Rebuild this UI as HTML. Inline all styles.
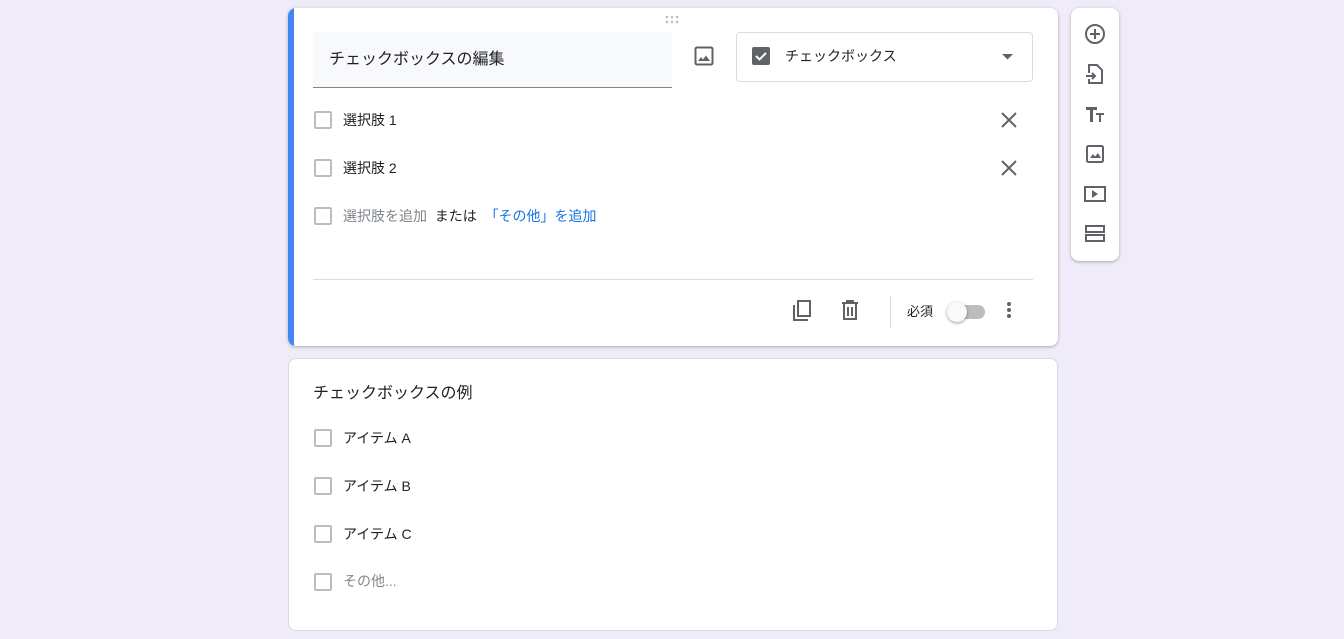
<!DOCTYPE html>
<html><head><meta charset="utf-8"><style>
body{margin:0;width:1344px;height:639px;background:#f0ebf8;font-family:"Liberation Sans","Noto Sans CJK JP",sans-serif;color:#202124;position:relative;overflow:hidden}
.a{position:absolute}
.card{position:absolute;background:#fff;border-radius:8px;border:1px solid #dadce0;box-sizing:border-box}
.cb{position:absolute;width:18px;height:18px;border:2px solid #bdbdbd;border-radius:2px;box-sizing:border-box}
.t{position:absolute;font-size:14px;white-space:nowrap;line-height:20px}
svg{position:absolute}
</style></head><body>
<div class="card" style="left:288px;top:8px;width:770px;height:338px;border:none;box-shadow:0 1px 3px rgba(0,0,0,.3);overflow:hidden">
<div class="a" style="left:0;top:0;width:6px;height:338px;background:#4285f4"></div>
</div>
<svg style="left:665px;top:15px" width="16" height="10"><g fill="#bdbdbd"><circle cx="2" cy="2" r="1.3"/><circle cx="7" cy="2" r="1.3"/><circle cx="12" cy="2" r="1.3"/><circle cx="2" cy="7" r="1.3"/><circle cx="7" cy="7" r="1.3"/><circle cx="12" cy="7" r="1.3"/></g></svg>
<div class="a" style="left:313px;top:32px;width:359px;height:55px;background:#f8f9fa;border-bottom:1px solid #80868b"></div>
<div class="t" style="left:329px;top:50px;font-size:16px">チェックボックスの編集</div>
<svg style="left:694px;top:46px" width="20" height="20" viewBox="0 0 20 20"><rect x="1.5" y="1.5" width="17" height="17" rx="1.5" fill="none" stroke="#5f6368" stroke-width="2"/><path d="M4 15l3-4 2 2.5 3-4 4 5.5z" fill="#5f6368"/></svg>
<div class="a" style="left:736px;top:32px;width:297px;height:50px;border:1px solid #dadce0;border-radius:4px;box-sizing:border-box"></div>
<svg style="left:752px;top:47px" width="18" height="18"><rect width="18" height="18" rx="2" fill="#5f6368"/><path d="M4 9l3.5 3.5L14 6" stroke="#fff" stroke-width="2" fill="none"/></svg>
<div class="t" style="left:785px;top:46px">チェックボックス</div>
<svg style="left:1002px;top:54px" width="12" height="6"><path d="M0 0h11L5.5 5.5z" fill="#5f6368"/></svg>
<div class="cb" style="left:314px;top:111px"></div><div class="t" style="left:343px;top:110px">選択肢 1</div>
<div class="cb" style="left:314px;top:159px"></div><div class="t" style="left:343px;top:158px">選択肢 2</div>
<div class="cb" style="left:314px;top:207px"></div><div class="t" style="left:343px;top:206px"><span style="color:#80868b">選択肢を追加</span>&nbsp; または &nbsp;<span style="color:#1a73e8">「その他」を追加</span></div>
<svg style="left:1001px;top:112px" width="16" height="16"><path d="M1 1l14 14M15 1L1 15" stroke="#5f6368" stroke-width="2"/></svg>
<svg style="left:1001px;top:160px" width="16" height="16"><path d="M1 1l14 14M15 1L1 15" stroke="#5f6368" stroke-width="2"/></svg>
<div class="a" style="left:313px;top:279px;width:720px;height:1px;background:#dadce0"></div>
<svg style="left:791px;top:299px" width="22" height="22"><path d="M3 6v15h14" fill="none" stroke="#5f6368" stroke-width="2"/><rect x="7" y="2" width="12" height="15" fill="none" stroke="#5f6368" stroke-width="2"/></svg>
<svg style="left:840px;top:300px" width="20" height="20"><path d="M2 3h16M7 3V1h6v2M4 4v15h12V4M8 7v9M12 7v9" fill="none" stroke="#5f6368" stroke-width="2"/></svg>
<div class="a" style="left:890px;top:296px;width:1px;height:32px;background:#dadce0"></div>
<div class="t" style="left:907px;top:302px;font-size:13px">必須</div>
<div class="a" style="left:952px;top:305px;width:33px;height:14px;border-radius:7px;background:#bdbdbd"></div>
<div class="a" style="left:947px;top:302px;width:20px;height:20px;border-radius:50%;background:#fafafa;box-shadow:0 1px 3px rgba(0,0,0,.4)"></div>
<svg style="left:1006px;top:301px" width="6" height="18"><g fill="#5f6368"><circle cx="3" cy="3" r="2"/><circle cx="3" cy="9" r="2"/><circle cx="3" cy="15" r="2"/></g></svg>
<div class="card" style="left:1071px;top:8px;width:48px;height:253px;border:none;box-shadow:0 1px 3px rgba(0,0,0,.3)"></div>
<svg style="left:1085px;top:24px" width="20" height="20"><circle cx="10" cy="10" r="9" fill="none" stroke="#5f6368" stroke-width="2"/><path d="M10 5v10M5 10h10" stroke="#5f6368" stroke-width="2"/></svg>
<svg style="left:1085px;top:64px" width="20" height="20"><path d="M4 9V1h8l5 5v13H4v-4" fill="none" stroke="#5f6368" stroke-width="2"/><path d="M1 12h9M7 9l3 3-3 3" fill="none" stroke="#5f6368" stroke-width="2"/></svg>
<svg style="left:1085px;top:104px" width="20" height="20"><path d="M1 3h11v3H8v12H5V6H1zM11 9h8v2h-3v7h-2v-7h-3z" fill="#5f6368"/></svg>
<svg style="left:1085px;top:144px" width="20" height="20"><rect x="2" y="2" width="16" height="16" rx="1.5" fill="none" stroke="#5f6368" stroke-width="2"/><path d="M5 14l3-4 2 2.5 3-3.5 3 5z" fill="#5f6368"/></svg>
<svg style="left:1084px;top:184px" width="22" height="20"><rect x="1" y="3" width="20" height="14" fill="none" stroke="#5f6368" stroke-width="2"/><path d="M8 6v8l6-4z" fill="#5f6368"/></svg>
<svg style="left:1085px;top:224px" width="20" height="20"><rect x="1" y="2" width="18" height="6" fill="none" stroke="#5f6368" stroke-width="2"/><rect x="1" y="11" width="18" height="6" fill="none" stroke="#5f6368" stroke-width="2"/></svg>
<div class="card" style="left:288px;top:358px;width:770px;height:273px"></div>
<div class="t" style="left:313px;top:384px;font-size:16px">チェックボックスの例</div>
<div class="cb" style="left:314px;top:429px"></div><div class="t" style="left:343px;top:428px">アイテム A</div>
<div class="cb" style="left:314px;top:477px"></div><div class="t" style="left:343px;top:476px">アイテム B</div>
<div class="cb" style="left:314px;top:525px"></div><div class="t" style="left:343px;top:524px">アイテム C</div>
<div class="cb" style="left:314px;top:573px"></div><div class="t" style="left:343px;top:571px;color:#80868b">その他...</div>
</body></html>
